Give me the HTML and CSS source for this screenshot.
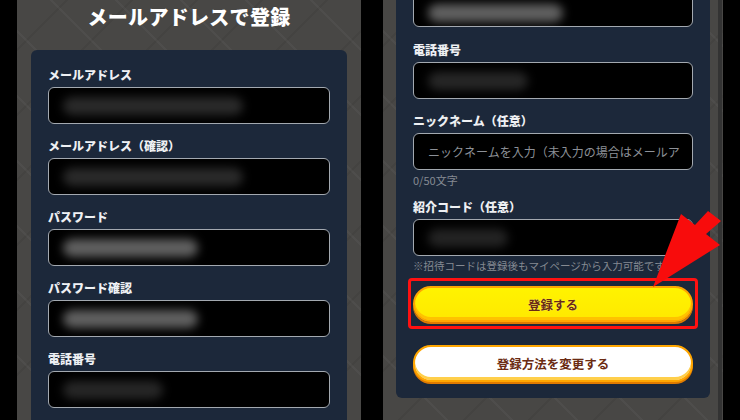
FILE: index.html
```html
<!DOCTYPE html>
<html lang="ja">
<head>
    <meta charset="UTF-8">
    <title>メールアドレスで登録</title>
    <link rel="stylesheet" href="styles.css">
</head>
<body>
    <div class="screen">
        <!-- 左：登録フォーム上部 -->
        <section class="phone phone-left">
            <h1 class="page-title">メールアドレスで登録</h1>
            <div class="panel panel-top">
                <div class="field">
                    <label>メールアドレス</label>
                    <div class="input"><span class="blur blur-email"></span></div>
                </div>
                <div class="field">
                    <label>メールアドレス（確認）</label>
                    <div class="input"><span class="blur blur-email"></span></div>
                </div>
                <div class="field">
                    <label>パスワード</label>
                    <div class="input"><span class="blur blur-pass"></span></div>
                </div>
                <div class="field">
                    <label>パスワード確認</label>
                    <div class="input"><span class="blur blur-pass"></span></div>
                </div>
                <div class="field">
                    <label>電話番号</label>
                    <div class="input"><span class="blur blur-tel"></span></div>
                </div>
            </div>
        </section>

        <!-- 右：スクロール後のフォーム下部 -->
        <section class="phone phone-right">
            <div class="panel panel-bottom">
                <div class="field field-cut">
                    <div class="input"><span class="blur blur-pass blur-high"></span></div>
                </div>
                <div class="field">
                    <label>電話番号</label>
                    <div class="input"><span class="blur blur-tel"></span></div>
                </div>
                <div class="field field-nick">
                    <label>ニックネーム（任意）</label>
                    <div class="input"><span class="placeholder">ニックネームを入力（未入力の場合はメールア</span></div>
                    <p class="counter">0/50文字</p>
                </div>
                <div class="field field-code">
                    <label>紹介コード（任意）</label>
                    <div class="input"><span class="blur blur-code"></span></div>
                    <p class="note">※招待コードは登録後もマイページから入力可能です</p>
                </div>
                <div class="highlight">
                    <button class="btn btn-primary">登録する</button>
                </div>
                <button class="btn btn-secondary">登録方法を変更する</button>
            </div>
            <span class="scrollbar"></span>
        </section>

        <svg class="arrow" viewBox="0 0 740 420" width="740" height="420">
            <polygon points="653,287 681,214 695,225 708,211 721,221 706,234 720,245" fill="#f80c0c"/>
        </svg>
    </div>
</body>
</html>
```

FILE: styles.css
```css
body {
    margin: 0;
    background-color: #000;
    font-family: "Noto Sans CJK JP", "Noto Sans", sans-serif;
}
.screen {
    position: relative;
    width: 740px;
    height: 420px;
    overflow: hidden;
    display: flex;
}
.phone {
    position: relative;
    height: 420px;
    overflow: hidden;
    background-color: #484745;
    background-image:
        repeating-linear-gradient(45deg, transparent 0 44px, rgba(255,255,255,0.035) 44px 46px),
        repeating-linear-gradient(-45deg, transparent 0 44px, rgba(0,0,0,0.06) 44px 46px);
}
.phone-left {
    margin-left: 17px;
    width: 344px;
}
.phone-right {
    margin-left: 22px;
    width: 340px;
}
.page-title {
    margin: 0 0 16px;
    line-height: 34px;
    font-size: 20px;
    font-weight: 900;
    color: #fff;
    text-align: center;
    letter-spacing: 0.3px;
}
.panel {
    background-color: #1c283a;
    padding: 0 17px;
}
.panel-top {
    margin: 0 14px;
    padding-top: 17px;
    height: 400px;
    border-radius: 6px 6px 0 0;
}
.panel-bottom {
    margin: 0 13px;
    padding-bottom: 16px;
    border-radius: 0 0 6px 6px;
}
.field {
    margin-bottom: 14px;
}
.field label {
    display: block;
    font-size: 12px;
    font-weight: 900;
    line-height: 16px;
    color: #eef0f3;
    margin-bottom: 4px;
}
.input {
    box-sizing: border-box;
    height: 37px;
    background-color: #000;
    border: 1.5px solid #a3a9b0;
    border-radius: 6px;
    display: flex;
    align-items: center;
    overflow: hidden;
}
.blur {
    display: block;
    height: 18px;
    margin-left: 14px;
    border-radius: 9px;
    filter: blur(5px);
}
.blur-email {
    width: 180px;
    background-color: #2a2a2a;
}
.blur-pass {
    width: 135px;
    background-color: #606060;
}
.blur-tel {
    width: 100px;
    background-color: #262626;
}
.blur-code {
    width: 80px;
    background-color: #232323;
}
.blur-high {
    margin-top: 8px;
}
.placeholder {
    margin-left: 14px;
    font-size: 12px;
    color: #8c9097;
    white-space: nowrap;
}
.field-cut {
    margin-top: -10px;
    margin-bottom: 15px;
}
.counter,
.note {
    margin: 3px 0 0;
    font-size: 11px;
    line-height: 14px;
    color: #858a92;
}
.note {
    font-size: 10.5px;
}
.field-nick {
    margin-bottom: 12px;
}
.field-code {
    margin-bottom: 5px;
}
.highlight {
    margin: 0 -5px;
    padding: 5px 2px 4px;
    border: 3px solid #ff1111;
    border-radius: 4px;
}
.btn {
    box-sizing: border-box;
    display: flex;
    align-items: center;
    justify-content: center;
    width: 100%;
    height: 36px;
    border-radius: 18px;
    font-family: inherit;
    font-size: 12.5px;
    font-weight: bold;
    color: #6b2b12;
    text-shadow: 0 0 1px rgba(255,255,255,0.6);
    cursor: pointer;
}
.btn-primary {
    background: linear-gradient(#fff300, #ffe900);
    border: 2px solid #ffa600;
    box-shadow: inset 0 -3px 0 #ffc200, 0 2px 0 #e07a00;
}
.btn-secondary {
    margin-top: 16px;
    height: 37px;
    background: #fff;
    border: 2px solid #ffa600;
    box-shadow: inset 0 -3px 0 #ffcf4a, 0 2px 0 #e07a00;
}
.scrollbar {
    position: absolute;
    top: 0;
    right: 1px;
    width: 4px;
    height: 420px;
    background-color: #333;
}
.arrow {
    position: absolute;
    top: 0;
    left: 0;
    pointer-events: none;
}
```
